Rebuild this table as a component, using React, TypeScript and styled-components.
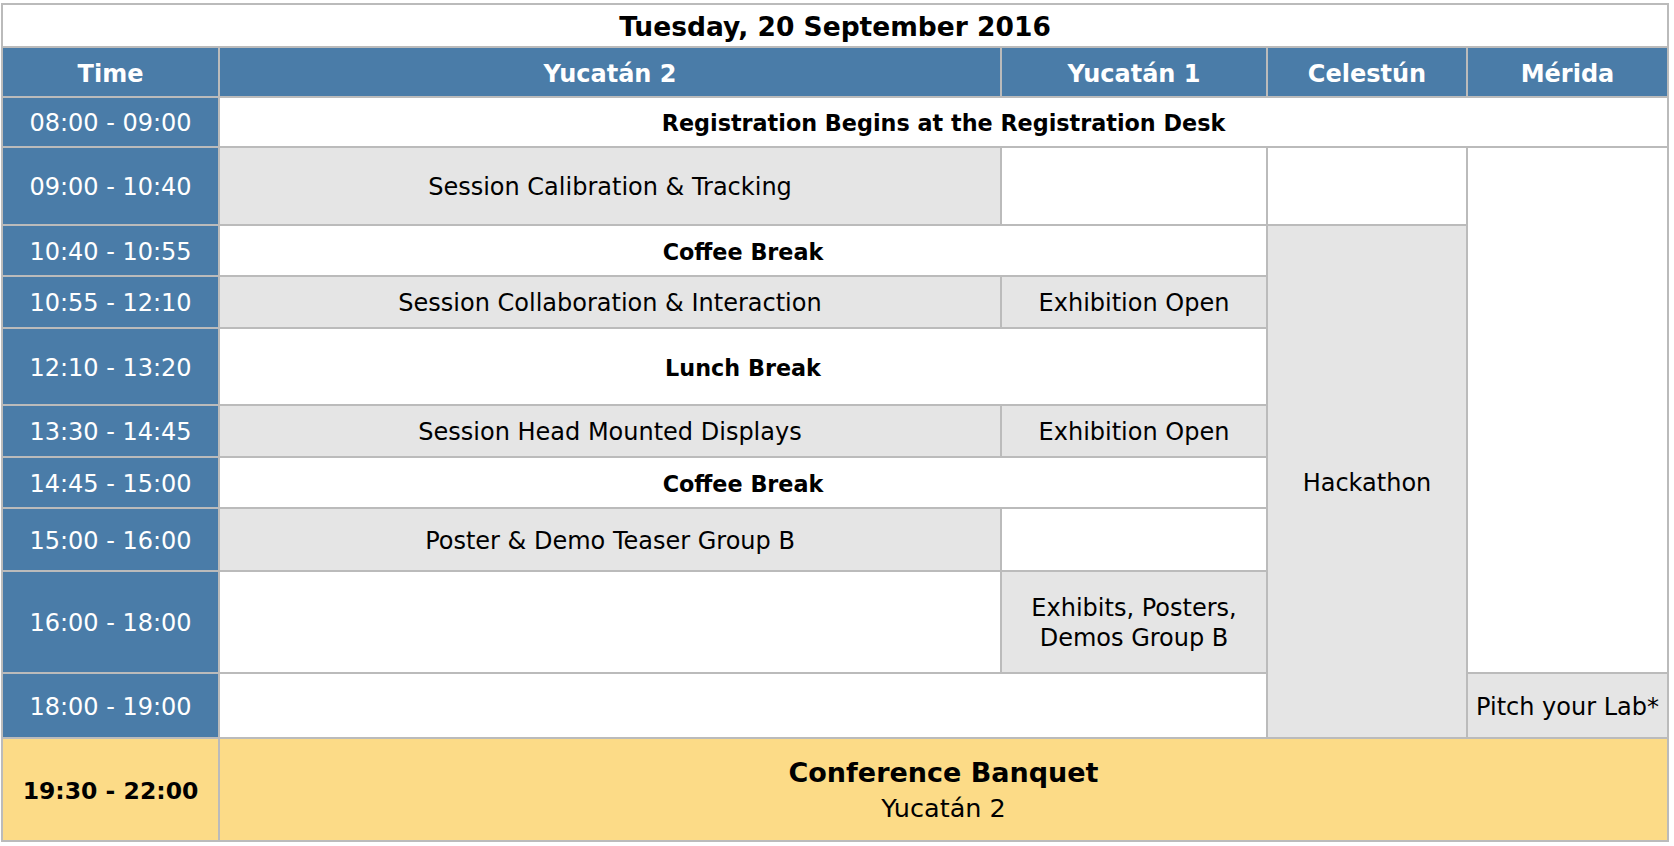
import React from "react";
import styled, { createGlobalStyle } from "styled-components";

type Tone = "white" | "grey" | "blue" | "yellow";

interface Slot {
  col: string;
  row: string;
  tone: Tone;
  text?: string;
  bold?: boolean;
}

const ROW_HEIGHTS = [41, 48, 48, 76, 49, 50, 75, 50, 49, 61, 100, 63, 101];

const ROOMS = ["Time", "Yucatán 2", "Yucatán 1", "Celestún", "Mérida"];

const TIMES = [
  "08:00 - 09:00",
  "09:00 - 10:40",
  "10:40 - 10:55",
  "10:55 - 12:10",
  "12:10 - 13:20",
  "13:30 - 14:45",
  "14:45 - 15:00",
  "15:00 - 16:00",
  "16:00 - 18:00",
  "18:00 - 19:00",
];

const SLOTS: Slot[] = [
  { col: "2 / 6", row: "3", tone: "white", text: "Registration Begins at the Registration Desk", bold: true },

  { col: "2", row: "4", tone: "grey", text: "Session Calibration & Tracking" },
  { col: "3", row: "4", tone: "white" },
  { col: "4", row: "4", tone: "white" },
  { col: "5", row: "4 / 12", tone: "white" },

  { col: "2 / 4", row: "5", tone: "white", text: "Coffee Break", bold: true },
  { col: "4", row: "5 / 13", tone: "grey", text: "Hackathon" },

  { col: "2", row: "6", tone: "grey", text: "Session Collaboration & Interaction" },
  { col: "3", row: "6", tone: "grey", text: "Exhibition Open" },

  { col: "2 / 4", row: "7", tone: "white", text: "Lunch Break", bold: true },

  { col: "2", row: "8", tone: "grey", text: "Session Head Mounted Displays" },
  { col: "3", row: "8", tone: "grey", text: "Exhibition Open" },

  { col: "2 / 4", row: "9", tone: "white", text: "Coffee Break", bold: true },

  { col: "2", row: "10", tone: "grey", text: "Poster & Demo Teaser Group B" },
  { col: "3", row: "10", tone: "white" },

  { col: "2", row: "11", tone: "white" },
  { col: "3", row: "11", tone: "grey", text: "Exhibits, Posters, Demos Group B" },

  { col: "2 / 4", row: "12", tone: "white" },
  { col: "5", row: "12", tone: "grey", text: "Pitch your Lab*" },
];

const BG: Record<Tone, string> = {
  white: "#ffffff",
  grey: "#e5e5e5",
  blue: "#4a7ca8",
  yellow: "#fcdb87",
};

const GlobalStyle = createGlobalStyle`
  html, body {
    margin: 0;
    padding: 0;
    background: #ffffff;
  }
  body {
    font-family: "DejaVu Sans", Verdana, sans-serif;
    color: #000000;
  }
`;

const Schedule = styled.div`
  display: grid;
  grid-template-columns: 215px 780px 264px 198px 199px;
  grid-template-rows: ${ROW_HEIGHTS.map((h) => `${h}px`).join(" ")};
  gap: 2px;
  padding: 2px;
  margin: 3px 0 0 1px;
  width: max-content;
  background: #bbbbbb;
`;

const Cell = styled.div<{ $col: string; $row: string; $tone: Tone; $bold?: boolean }>`
  grid-column: ${(p) => p.$col};
  grid-row: ${(p) => p.$row};
  background: ${(p) => BG[p.$tone]};
  color: ${(p) => (p.$tone === "blue" ? "#ffffff" : "#000000")};
  display: flex;
  align-items: center;
  justify-content: center;
  text-align: center;
  padding: 2px 4px 0;
  font-size: ${(p) => (p.$bold ? "22.3px" : "24px")};
  font-weight: ${(p) => (p.$bold ? 700 : 400)};
  line-height: 30px;
`;

const TitleCell = styled.div`
  grid-column: 1 / 6;
  grid-row: 1;
  background: #ffffff;
  display: flex;
  align-items: center;
  justify-content: center;
  padding-top: 2px;
  font-size: 26.5px;
  font-weight: 700;
`;

const HeadCell = styled.div<{ $col: number }>`
  grid-column: ${(p) => p.$col};
  grid-row: 2;
  background: ${BG.blue};
  color: #ffffff;
  display: flex;
  align-items: center;
  justify-content: center;
  padding-top: 4px;
  font-size: 24px;
  font-weight: 700;
`;

const TimeCell = styled.div<{ $row: number; $highlight?: boolean }>`
  grid-column: 1;
  grid-row: ${(p) => p.$row};
  background: ${(p) => (p.$highlight ? BG.yellow : BG.blue)};
  color: ${(p) => (p.$highlight ? "#000000" : "#ffffff")};
  font-weight: ${(p) => (p.$highlight ? 700 : 400)};
  font-size: ${(p) => (p.$highlight ? "23.5px" : "24px")};
  display: flex;
  align-items: center;
  justify-content: center;
  padding-top: 2px;
`;

const BanquetCell = styled.div`
  grid-column: 2 / 6;
  grid-row: 13;
  background: ${BG.yellow};
  display: flex;
  flex-direction: column;
  align-items: center;
  justify-content: center;
`;

const BanquetTitle = styled.div`
  font-size: 27px;
  font-weight: 700;
  line-height: 36px;
`;

const BanquetRoom = styled.div`
  font-size: 25.5px;
  line-height: 34px;
`;

export default function App() {
  return (
    <>
      <GlobalStyle />
      <Schedule>
        <TitleCell>Tuesday, 20 September 2016</TitleCell>
        {ROOMS.map((room, i) => (
          <HeadCell key={room} $col={i + 1}>
            {room}
          </HeadCell>
        ))}
        {TIMES.map((t, i) => (
          <TimeCell key={t} $row={i + 3}>
            {t}
          </TimeCell>
        ))}
        {SLOTS.map((s, i) => (
          <Cell key={i} $col={s.col} $row={s.row} $tone={s.tone} $bold={s.bold}>
            {s.text}
          </Cell>
        ))}
        <TimeCell $row={13} $highlight>
          19:30 - 22:00
        </TimeCell>
        <BanquetCell>
          <BanquetTitle>Conference Banquet</BanquetTitle>
          <BanquetRoom>Yucatán 2</BanquetRoom>
        </BanquetCell>
      </Schedule>
    </>
  );
}
